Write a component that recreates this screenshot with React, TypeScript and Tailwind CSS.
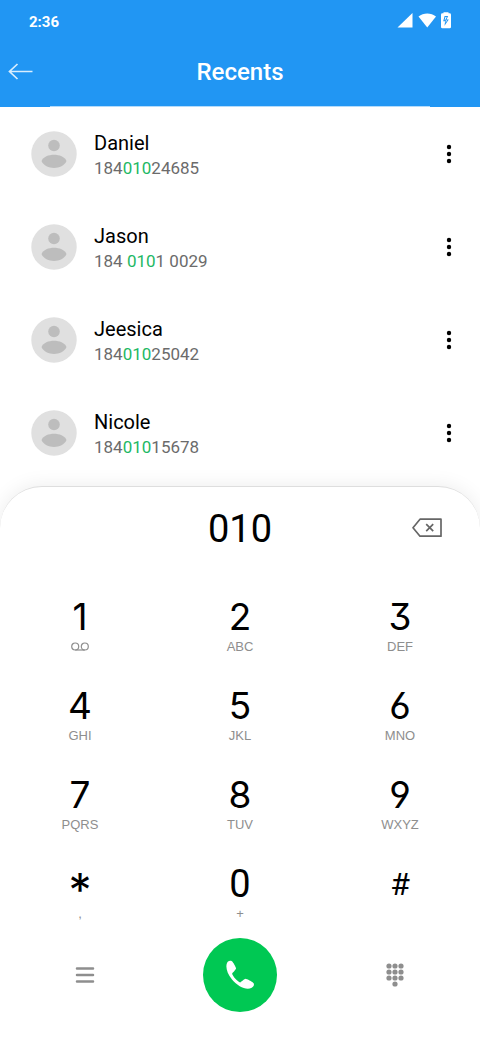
import React, { useState } from 'react';

interface Contact {
  name: string;
  phone: string;
}

interface DialKey {
  value: string;
  label: string;
}

const contacts: Contact[] = [
  { name: 'Daniel', phone: '18401024685' },
  { name: 'Jason', phone: '184 0101 0029' },
  { name: 'Jeesica', phone: '18401025042' },
  { name: 'Nicole', phone: '18401015678' }
];

const dialKeys: DialKey[] = [
  { value: '1', label: 'voicemail' },
  { value: '2', label: 'ABC' },
  { value: '3', label: 'DEF' },
  { value: '4', label: 'GHI' },
  { value: '5', label: 'JKL' },
  { value: '6', label: 'MNO' },
  { value: '7', label: 'PQRS' },
  { value: '8', label: 'TUV' },
  { value: '9', label: 'WXYZ' },
  { value: '*', label: ',' },
  { value: '0', label: '+' },
  { value: '#', label: '' }
];

const StatusBar: React.FC = () => (
  <div className="flex items-center justify-between h-11 pl-[29px] pr-7 text-white">
    <span className="text-[15px] font-bold">2:36</span>
    <svg width="56" height="18" viewBox="0 0 56 18" fill="currentColor" className="-mt-1" aria-hidden="true">
      <path d="M16.500 2v14.500H1.500z" />
      <path d="M22.500 5.500c5-4 12.500-4 17.500 0l-8.750 11z" />
      <path
        fillRule="evenodd"
        d="M47.500 2.300V1.200h5v1.100h1.100q1.400 0 1.400 1.400v12.200q0 1.400-1.400 1.400h-7.200q-1.400 0-1.400-1.400V3.700q0-1.400 1.400-1.400zM48.600 5l-1.400 5.200h1.900l-.6 4.600 4.300-6.400h-2.300l1.700-3.400zM49.400 6h1.300l-1.600 3.300h2l-1.500 2.400.3-2.400h-1.300z"
      />
    </svg>
  </div>
);

const Header: React.FC = () => (
  <header className="bg-[#2196f3]">
    <StatusBar />
    <div className="grid grid-cols-[1fr_auto_1fr] items-center h-14 px-2 text-white">
      <button type="button" aria-label="Back" className="w-6">
        <svg width="26" height="18" viewBox="0 0 26 18" fill="none" stroke="#d9eefe" strokeWidth="1.700">
          <path d="M1.500 8.500H24.500M9.500 1L1.500 8.500L9.500 16" />
        </svg>
      </button>
      <h1 className="text-2xl font-medium">Recents</h1>
    </div>
    <div className="h-[7px] px-[50px] flex items-end">
      <div className="h-px w-full bg-[#b3dbfb]" />
    </div>
  </header>
);

const Avatar: React.FC = () => (
  <svg width="46" height="46" viewBox="0 0 46 46" aria-hidden="true">
    <circle cx="23" cy="23" r="22.700" fill="#e0e0e0" />
    <circle cx="23" cy="14.500" r="5.800" fill="#bdbdbd" />
    <path d="M10.500 30C14 21.800 32 21.800 35.500 30C31.500 39.300 14.500 39.300 10.500 30z" fill="#bdbdbd" />
  </svg>
);

const ContactRow: React.FC<{ contact: Contact; query: string }> = ({ contact, query }) => {
  const start = query ? contact.phone.indexOf(query) : -1;

  return (
    <li className="flex items-center h-[93px] pl-[31px] pr-[19px]">
      <Avatar />
      <div className="flex-1 ml-[17px] pt-[3px]">
        <p className="text-xl leading-[26px] text-black">{contact.name}</p>
        <p className="text-[17px] leading-6 text-[#6b6b6b]">
          {start < 0 ? (
            contact.phone
          ) : (
            <>
              {contact.phone.slice(0, start)}
              <span className="text-[#1db864]">{query}</span>
              {contact.phone.slice(start + query.length)}
            </>
          )}
        </p>
      </div>
      <button type="button" aria-label={`More options for ${contact.name}`} className="w-6">
        <svg width="24" height="24" viewBox="0 0 24 24" fill="#000">
          <circle cx="12" cy="5" r="2.200" />
          <circle cx="12" cy="12" r="2.200" />
          <circle cx="12" cy="19" r="2.200" />
        </svg>
      </button>
    </li>
  );
};

const VoicemailIcon: React.FC = () => (
  <svg width="18" height="10" viewBox="0 0 18 10" fill="none" stroke="#8e8e8e" strokeWidth="1.200">
    <circle cx="4.200" cy="4.500" r="3.500" />
    <circle cx="13.800" cy="4.500" r="3.500" />
    <path d="M4.200 8h9.600" />
  </svg>
);

// Symbols sit on the line differently from digits, so they get their own size
const keyClass = (value: string) => {
  if (value === '*') return "h-10 font-['Inter',sans-serif] text-[46px] leading-[52px]";
  if (value === '#') return 'text-[32px] leading-10';
  if (value === '0') return 'text-[38px] leading-10';
  return "font-['Inter',sans-serif] text-[37px] leading-10 [font-feature-settings:'cv03','cv04','cv09']";
};

const Keypad: React.FC<{ onPress: (value: string) => void }> = ({ onPress }) => (
  <div className="grid grid-cols-3">
    {dialKeys.map((key) => (
      <button
        key={key.value}
        type="button"
        onClick={() => onPress(key.value)}
        className="flex flex-col items-center justify-center h-[89px] text-black"
      >
        <span className={keyClass(key.value)}>{key.value}</span>
        <span className="flex items-center h-5 font-['Liberation_Sans',sans-serif] text-[13px] leading-5 text-[#8e8e8e]">
          {key.label === 'voicemail' ? <VoicemailIcon /> : key.label}
        </span>
      </button>
    ))}
  </div>
);

const CallBar: React.FC = () => (
  <div className="grid grid-cols-3 items-center pb-7">
    <button type="button" aria-label="Menu" className="justify-self-center ml-[10px]">
      <svg width="20" height="20" viewBox="0 0 20 20" stroke="#8e8e8e" strokeWidth="2.500" strokeLinecap="round">
        <path d="M2 3.500h16M2 10h16M2 16.500h16" />
      </svg>
    </button>
    <button
      type="button"
      aria-label="Call"
      className="justify-self-center flex items-center justify-center w-[74px] h-[74px] rounded-full bg-[#00c853]"
    >
      <svg width="30" height="30" viewBox="0 0 30 30" fill="#fff">
        <path d="M2.500 1.900C3.600.9 5.300.5 6.500.9C7.600 1.300 10 5.100 11 8C11.500 9.500 7.500 12.500 7.100 13.800C7.800 16.500 12.500 21.500 15.300 22.500C16.500 22 19.500 18.500 21 18.900C24 19.700 28 22 28.800 23.500C29.300 25 28.500 26.500 26.700 27.800C21 30.500 13 26.500 7 19.500C1.500 13 .1 5.500 2.500 1.900z" />
      </svg>
    </button>
    <button type="button" aria-label="Hide dialpad" className="justify-self-center mr-[10px]">
      <svg width="20" height="24" viewBox="0 0 20 24" fill="#8e8e8e">
        {[3, 9, 15].map((y) => [4, 10, 16].map((x) => <circle key={`${x}-${y}`} cx={x} cy={y} r="2.600" />))}
        <circle cx="10" cy="21" r="2.600" />
      </svg>
    </button>
  </div>
);

export default function App() {
  const [query, setQuery] = useState('010');

  return (
    <div className="min-h-screen flex flex-col bg-white font-['Roboto',sans-serif]">
      <Header />
      <ul className="pb-[7px]">
        {contacts.map((contact) => (
          <ContactRow key={contact.name} contact={contact} query={query} />
        ))}
      </ul>
      <section className="flex-1 rounded-t-[42px] border-t border-[#dedede] bg-white shadow-[0_0_20px_rgba(0,0,0,0.08)]">
        <div className="grid grid-cols-[1fr_160px_1fr] items-center h-[82px] px-[38px]">
          <input
            type="tel"
            aria-label="Phone number"
            value={query}
            onChange={(e) => setQuery(e.target.value)}
            className="col-start-2 w-full pt-0.5 text-center text-[38px] text-black focus:outline-none"
          />
          <button
            type="button"
            aria-label="Delete digit"
            onClick={() => setQuery(query.slice(0, -1))}
            className="justify-self-end"
          >
            <svg width="30" height="20" viewBox="0 0 30 20" fill="none" stroke="#666" strokeWidth="1.700">
              <path d="M8 1.200h21v17H8L1 9.700z" strokeLinejoin="round" />
              <path d="M14.200 6.200l7 7M21.200 6.200l-7 7" />
            </svg>
          </button>
        </div>
        <div className="pt-[13px]">
          <Keypad onPress={(value) => setQuery(query + value)} />
          <CallBar />
        </div>
      </section>
    </div>
  );
}
